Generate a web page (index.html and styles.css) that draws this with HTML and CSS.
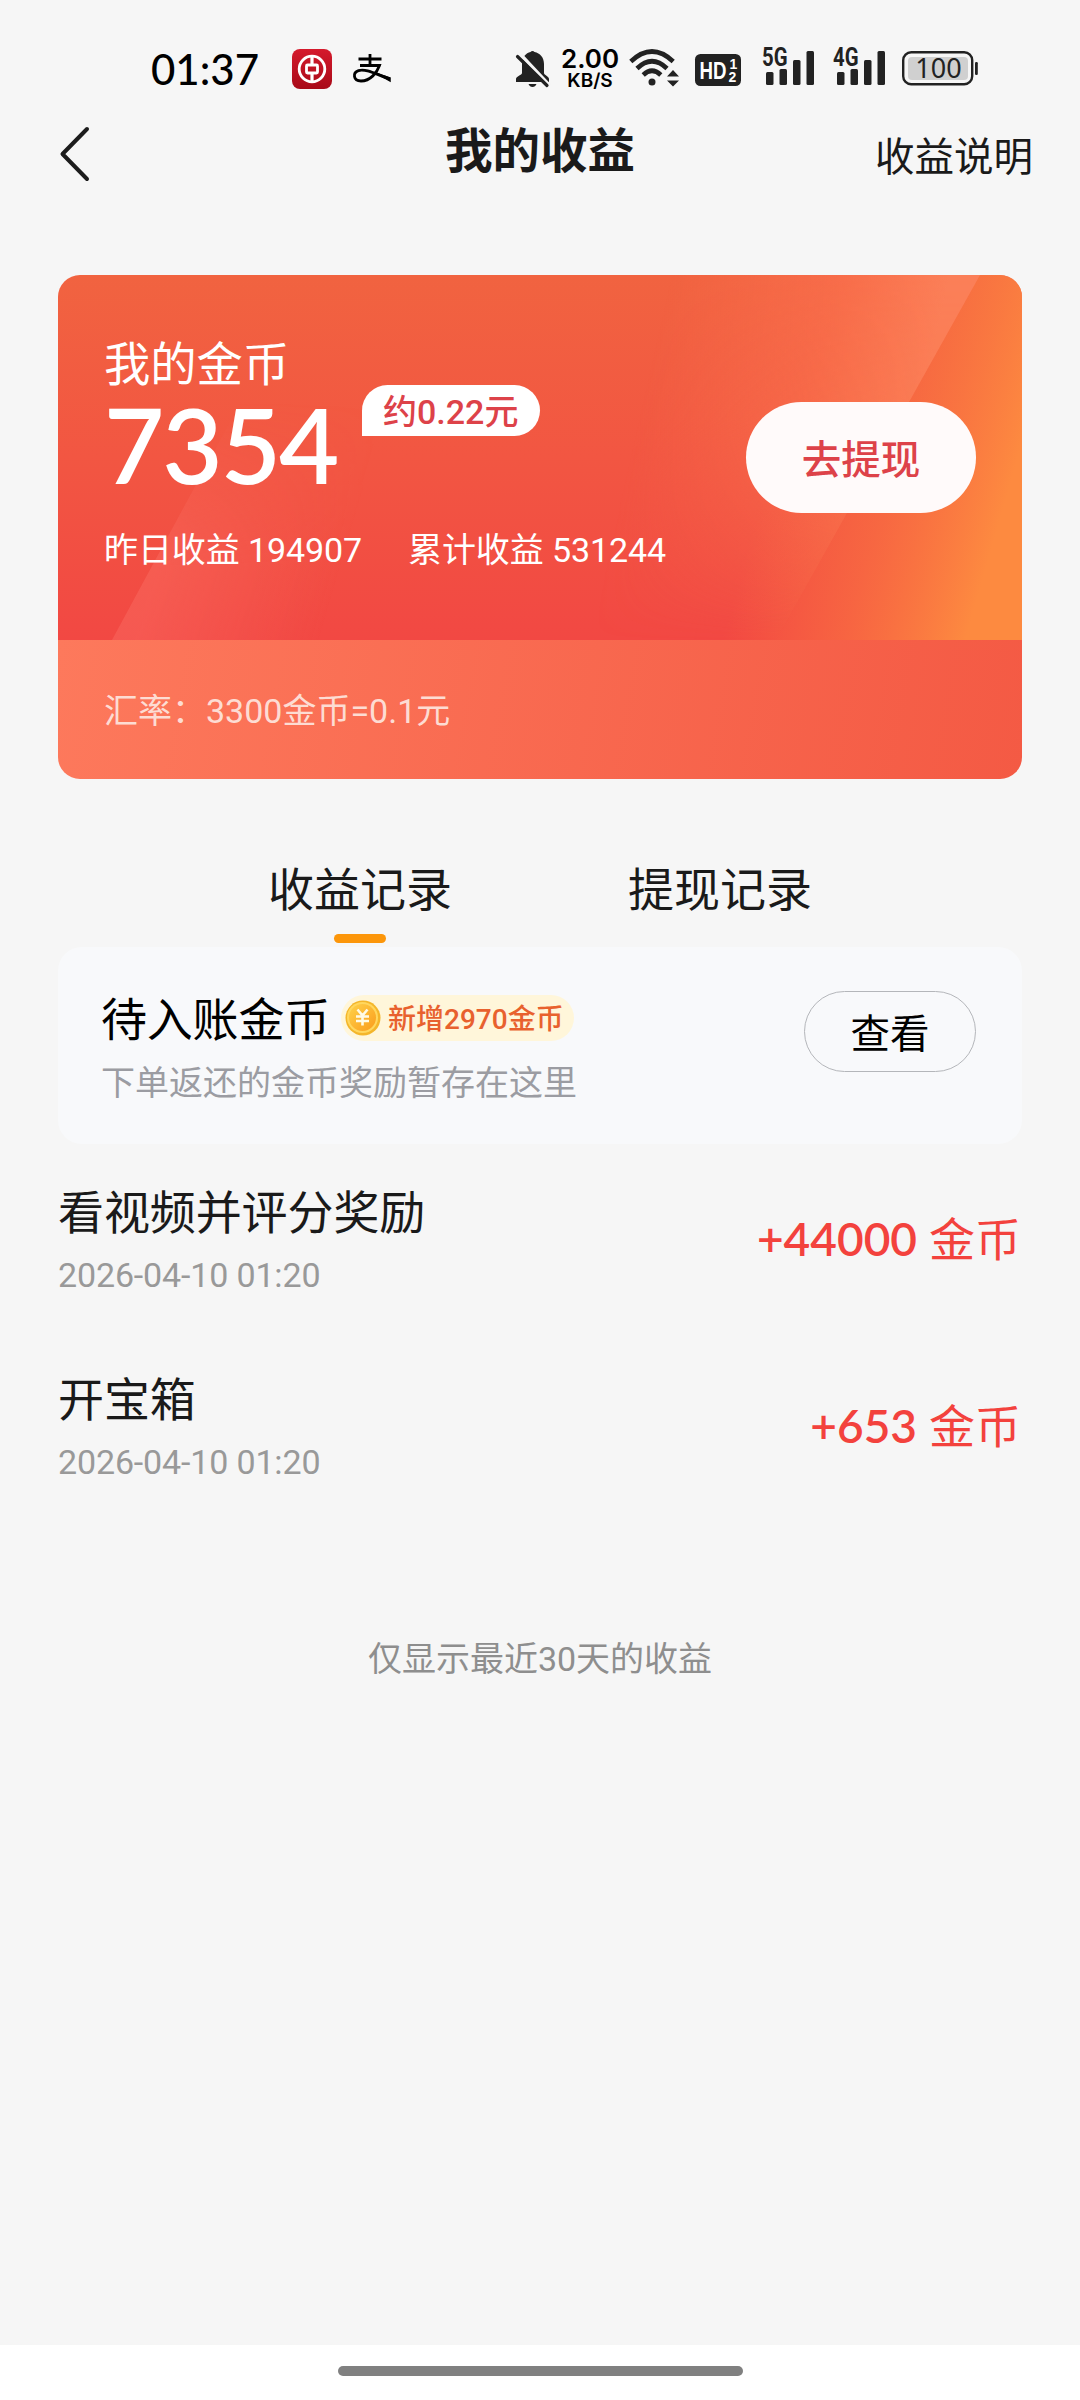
FILE: index.html
```html
<!DOCTYPE html>
<html lang="zh-CN">
<head>
<meta charset="utf-8">
<title>我的收益</title>
<link rel="stylesheet" href="styles.css">
</head>
<body>
<div class="status">
  <div class="status-left">
    <span class="clock">01:37</span>
    <svg class="app-icon" width="40" height="40" viewBox="0 0 40 40">
      <defs><linearGradient id="boc" x1="0" y1="0" x2="0" y2="1"><stop offset="0" stop-color="#d51a2c"/><stop offset="1" stop-color="#a80a18"/></linearGradient></defs>
      <rect width="40" height="40" rx="8" fill="url(#boc)"/>
      <g fill="none" stroke="#fff"><circle cx="20" cy="20" r="12.8" stroke-width="2.8"/><rect x="14.500" y="16" width="11" height="8" rx="1" stroke-width="2.800"/><path d="M20 7v8.500M20 25v8" stroke-width="3.200"/></g>
    </svg>
    <svg class="pay-icon" width="38" height="30" viewBox="0 0 38 30" fill="none" stroke="#000">
      <path d="M17 0v11M5.500 5h23" stroke-width="2.800"/>
      <path d="M7 11.500h19.500C24 18.500 17.500 27 8 27 0 27-.5 18.500 5.500 16.600 14 14 25 21.500 37 24.800" stroke-width="2.800"/>
      <path d="M24 19.500l13 4.500v3z" fill="#000" stroke-width="1.500"/>
    </svg>
  </div>
  <div class="status-right">
    <svg class="bell" width="36" height="40" viewBox="0 0 36 40">
      <path fill="#222" d="M7 16C7 9 11 5 15.500 4a2.500 2.500 0 0 1 4 0C25 5 29 9.500 29 16v9c0 2 5 3.500 5 6v3H1v-3c0-2.500 6-4 6-6zM13.500 36h8q-1.200 3-4 3t-4-3"/>
      <path d="M5.500 6.500L35 38" stroke="#f5f5f5" stroke-width="3.500"/>
      <path d="M2.500 8.500L32 37.500" stroke="#222" stroke-width="3.200" stroke-linecap="round"/>
    </svg>
    <div class="speed"><b class="speed-num">2.00</b><b class="speed-unit">KB/S</b></div>
    <svg class="wifi" width="50" height="40" viewBox="0 0 50 40">
      <g fill="none" stroke="#222" stroke-width="4.600"><path d="M1.800 13.500Q23 -6.500 44.200 13.500"/><path d="M8 20.500Q23 6 38 20.500"/><path d="M14.200 27Q23 18.500 31.800 27"/></g>
      <circle cx="23" cy="34" r="3.500" fill="#222"/><path d="M38 28.500l6-6.500 6 6.500zM38 32.500l6 6 6-6z" fill="#222"/>
    </svg>
    <svg class="hd" width="46" height="32" viewBox="0 0 46 32">
      <rect width="46" height="32" rx="5.500" fill="#222"/>
      <text class="hd-main" x="4.500" y="25" textLength="27" lengthAdjust="spacingAndGlyphs">HD</text><text class="hd-sub" x="34.500" y="15">1</text><text class="hd-sub" x="33.500" y="28">2</text>
    </svg>
    <svg class="signal" width="53" height="38" viewBox="0 0 53 38">
      <text class="net" x="0" y="18" textLength="25.500" lengthAdjust="spacingAndGlyphs">5G</text>
      <g fill="#222"><rect x="4" y="24" width="7.500" height="13" rx="1.500"/><rect x="17.500" y="21" width="7.500" height="16" rx="1.500"/><rect x="31" y="12" width="7.500" height="25" rx="1.500"/><rect x="44.500" y="3" width="7.500" height="34" rx="1.500"/></g>
    </svg>
    <svg class="signal second" width="53" height="38" viewBox="0 0 53 38">
      <text class="net" x="0" y="18" textLength="25.500" lengthAdjust="spacingAndGlyphs">4G</text>
      <g fill="#222"><rect x="4" y="24" width="7.500" height="13" rx="1.500"/><rect x="17.500" y="21" width="7.500" height="16" rx="1.500"/><rect x="31" y="12" width="7.500" height="25" rx="1.500"/><rect x="44.500" y="3" width="7.500" height="34" rx="1.500"/></g>
    </svg>
    <svg class="battery" width="76" height="35" viewBox="0 0 76 35">
      <rect x="1.200" y="1.200" width="69" height="32" rx="8" fill="none" stroke="#222" stroke-width="2.400"/>
      <rect x="6" y="6" width="60" height="23" rx="4" fill="#d0d0d0"/>
      <rect x="73" y="11" width="2.800" height="13" rx="1.200" fill="#222"/>
      <text class="level" x="36.500" y="27" text-anchor="middle">100</text>
    </svg>
  </div>
</div>

<header class="header">
  <svg class="back" width="32" height="56" viewBox="0 0 32 56"><path d="M28 3L3.500 28 28 53" fill="none" stroke="#1c1c1c" stroke-width="4" stroke-linecap="round" stroke-linejoin="round"/></svg>
  <h1 class="title">我的收益</h1>
  <span class="help">收益说明</span>
</header>

<section class="card">
  <svg class="card-art" width="964" height="365" viewBox="0 0 964 365">
    <defs>
      <linearGradient id="base" x1="0" y1="0" x2="0" y2="1"><stop offset="0" stop-color="#f16340"/><stop offset=".5" stop-color="#f25642"/><stop offset="1" stop-color="#f24843"/></linearGradient>
      <linearGradient id="glow" gradientUnits="userSpaceOnUse" x1="720" y1="170" x2="945" y2="235"><stop offset="0" stop-color="#fa7040" stop-opacity="0"/><stop offset=".5" stop-color="#f97041" stop-opacity=".7"/><stop offset="1" stop-color="#fd8a40"/></linearGradient>
      <linearGradient id="band" gradientUnits="userSpaceOnUse" x1="600" y1="60" x2="865" y2="120"><stop offset="0" stop-color="#f96f4c" stop-opacity="0"/><stop offset=".6" stop-color="#f96f4c" stop-opacity=".8"/><stop offset="1" stop-color="#fb7f58"/></linearGradient>
      <linearGradient id="fade" x1="0" y1="0" x2="0" y2="1"><stop offset="0" stop-color="#fff"/><stop offset=".4" stop-color="#fff" stop-opacity=".85"/><stop offset="1" stop-color="#fff" stop-opacity="0"/></linearGradient>
      <mask id="soft"><rect width="964" height="365" fill="url(#fade)"/></mask>
      <linearGradient id="ray" gradientUnits="userSpaceOnUse" x1="90" y1="320" x2="260" y2="370"><stop offset="0" stop-color="#ff7d72" stop-opacity=".32"/><stop offset="1" stop-color="#ff7d72" stop-opacity="0"/></linearGradient>
      <linearGradient id="rayfade" x1="0" y1="0" x2="0" y2="1"><stop offset=".35" stop-color="#fff" stop-opacity="0"/><stop offset=".8" stop-color="#fff"/></linearGradient>
      <mask id="raymask"><rect width="964" height="365" fill="url(#rayfade)"/></mask>
    </defs>
    <rect width="964" height="365" fill="url(#base)"/>
    <rect x="600" width="364" height="365" fill="url(#glow)"/>
    <path d="M500 0h422L718 365H400z" fill="url(#band)" mask="url(#soft)"/>
    <path d="M54 365L200 95H500v270z" fill="url(#ray)" mask="url(#raymask)"/>
  </svg>
  <div class="card-main">
    <div class="balance">
      <div class="card-label">我的金币</div>
      <div class="amount-row"><span class="coins">7354</span><span class="approx">约0.22元</span></div>
      <div class="stats"><span>昨日收益 194907</span><span>累计收益 531244</span></div>
    </div>
    <div class="withdraw">去提现</div>
  </div>
  <div class="rate">汇率：3300金币=0.1元</div>
</section>

<nav class="tabs">
  <div class="tab active">收益记录</div>
  <div class="tab">提现记录</div>
</nav>

<section class="pending">
  <div class="pending-info">
    <div class="pending-head">
      <span class="pending-title">待入账金币</span>
      <span class="badge">
        <svg class="coin" width="36" height="36" viewBox="0 0 36 36">
          <defs><linearGradient id="gold" x1="0" y1="0" x2="1" y2="1"><stop offset="0" stop-color="#ffd24a"/><stop offset="1" stop-color="#fa9c1c"/></linearGradient></defs>
          <circle cx="18" cy="18" r="17.500" fill="#f4b62a"/><circle cx="17.500" cy="17.500" r="15.500" fill="#ffd75e"/><circle cx="17.500" cy="17.500" r="13.500" fill="url(#gold)"/>
          <path d="M12.500 9.500l5 6 5-6M17.500 15.500v10M11 16.500h13M11 21h13" fill="none" stroke="#fffbe6" stroke-width="2.600"/>
        </svg><span class="badge-text">新增2970金币</span></span>
    </div>
    <div class="pending-note">下单返还的金币奖励暂存在这里</div>
  </div>
  <div class="view">查看</div>
</section>

<main class="list">
  <div class="row">
    <div><div class="row-title">看视频并评分奖励</div><div class="row-time">2026-04-10 01:20</div></div>
    <div class="gain"><b class="gain-num">+44000</b>金币</div>
  </div>
  <div class="row">
    <div><div class="row-title">开宝箱</div><div class="row-time">2026-04-10 01:20</div></div>
    <div class="gain"><b class="gain-num">+653</b>金币</div>
  </div>
</main>
<p class="foot">仅显示最近30天的收益</p>
<div class="gesture"><div class="gesture-bar"></div></div>
</body>
</html>
```
FILE: styles.css
```css
* { box-sizing: border-box; }
body {
  margin: 0;
  width: 1080px;
  height: 2400px;
  display: flex;
  flex-direction: column;
  background: #f6f6f6;
  color: #1a1a1a;
  font-family: Roboto, "Noto Sans CJK SC", sans-serif;
}
.status { height: 110px; padding: 48px 102px 0 151px; display: flex; justify-content: space-between; align-items: flex-start; color: #000; }
.status-left, .status-right { display: flex; align-items: flex-start; }
.status svg { overflow: visible; }
.clock { font: 500 42px/42px Lato, sans-serif; width: 141px; }
.app-icon { margin-top: 1px; }
.pay-icon { margin: 6px 0 0 21px; }
.bell { margin-right: 9px; position: relative; left: -1px; }
.speed { width: 58px; display: flex; flex-direction: column; align-items: center; font-family: Inter, sans-serif; }
.speed-num { font-size: 26px; line-height: 22px; font-weight: 600; }
.speed-unit { font-size: 19px; line-height: 22px; font-weight: 600; }
.wifi { margin-left: 10px; }
.hd { margin: 6px 0 0 16px; }
.hd-main { font: 700 24px "Liberation Sans", sans-serif; fill: #fff; }
.hd-sub { font: 700 14px "Liberation Sans", sans-serif; fill: #fff; }
.signal { margin-left: 21px; }
.second { margin-left: 18px; }
.net { font: 700 25px Roboto, sans-serif; fill: #222; }
.battery { margin: 3px 0 0 16px; }
.level { font: 400 27px "Noto Sans", sans-serif; fill: #222; }

.header { height: 165px; padding: 15px 47px 0 59px; display: grid; grid-template-columns: 386px auto 1fr; align-items: start; }
.back { margin-top: 1px; }
.title { margin: 0; font-size: 47.5px; line-height: 54px; font-weight: 600; }
.help { justify-self: end; font-size: 39.5px; line-height: 66px; }

.card { position: relative; height: 504px; margin: 0 58px; border-radius: 22px; overflow: hidden; color: #fff; display: flex; flex-direction: column; }
.card-art { position: absolute; left: 0; top: 0; }
.card-main { position: relative; height: 365px; padding: 62px 46px 0 46px; display: flex; justify-content: space-between; align-items: flex-start; }
.card-label { font-size: 46.3px; line-height: 56px; }
.amount-row { display: flex; align-items: flex-start; height: 111px; }
.coins { margin-top: -1px; font: 600 104px/104px Lato, sans-serif; letter-spacing: -2px; width: 258px; }
.approx { margin-top: -8px; width: 178px; height: 51px; padding-left: 21px; background: #fff; border-radius: 26px 26px 26px 0; color: #dd4249; font-size: 34px; line-height: 54px; font-weight: 500; white-space: nowrap; }
.stats { display: flex; gap: 46px; font-size: 34px; line-height: 92px; letter-spacing: -.1px; white-space: nowrap; }
.withdraw { margin-top: 65px; width: 230px; height: 111px; border-radius: 56px; background: #fffafa; color: #dd4249; font-size: 39.5px; line-height: 117px; font-weight: 500; text-align: center; }
.rate { position: relative; height: 139px; padding-left: 46px; background: linear-gradient(100deg, #fd795c, #f45a44); color: #fddcd3; font-size: 34px; line-height: 142px; }

.tabs { height: 168px; padding: 81px 180px 0; display: grid; grid-template-columns: 1fr 1fr; }
.tab { display: flex; flex-direction: column; align-items: center; font-size: 46px; line-height: 60px; }
.active::after { content: ""; margin-top: 14px; width: 52px; height: 9px; border-radius: 5px; background: #fc960a; }

.pending { height: 197px; margin: 0 58px; padding: 44px 46px 0 43px; border-radius: 24px; background: #f8f9fb; display: flex; justify-content: space-between; align-items: flex-start; color: #000; }
.pending-head { display: flex; align-items: flex-start; }
.pending-title { margin-top: -1px; font-size: 46px; line-height: 60px; letter-spacing: -.2px; }
.badge { margin: 4px 0 0 11px; height: 46px; width: 233px; padding-left: 4px; border-radius: 23px; background: #fff6da; display: flex; align-items: center; gap: 7px; color: #e8612e; font-size: 28px; font-weight: 500; white-space: nowrap; }
.badge-text { padding-top: 3px; line-height: 43px; }
.coin { flex: none; }
.pending-note { margin-top: 12px; font-size: 34px; line-height: 42px; color: #9b9ca2; }
.view { width: 172px; height: 81px; border: 1px solid #b4b6ba; border-radius: 41px; text-align: center; font-size: 39.5px; line-height: 85px; }

.list { padding: 38px 59px 0 58px; }
.row { height: 187px; display: flex; justify-content: space-between; align-items: flex-start; }
.row-title { font-size: 46px; line-height: 62px; letter-spacing: -.1px; }
.row-time { margin-top: 10px; font-size: 34px; line-height: 42px; letter-spacing: -.15px; color: #999; }
.gain { margin-top: 27px; display: flex; gap: 12px; font-size: 46px; line-height: 62px; color: #f3423d; }
.gain-num { font: 600 46px/60px Lato, sans-serif; }
.foot { margin: 78px 0 0; text-align: center; font-size: 34px; line-height: 51px; color: #8e8e8e; }
.gesture { margin-top: auto; height: 55px; background: #fff; padding-top: 21px; }
.gesture-bar { width: 405px; height: 10px; margin: 0 auto; border-radius: 5px; background: #808080; }
```
